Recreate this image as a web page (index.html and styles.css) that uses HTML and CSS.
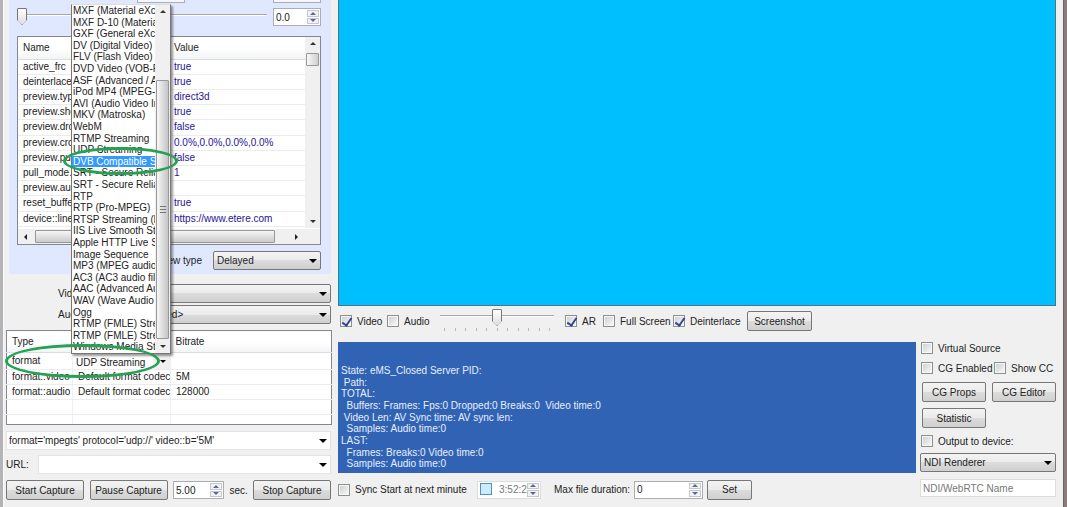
FILE: index.html
```
<!DOCTYPE html>
<html lang="en">
<head>
<meta charset="utf-8">
<title>Capture</title>
<link rel="stylesheet" href="styles.css">
</head>
<body>
<div class="window">
  <section class="side">
    <div class="props">
      <div class="cut-row"><span></span><span></span></div>
      <div class="slider-row">
        <div class="slider slider-start"><input type="range" min="0" max="100" value="0" aria-label="Level"></div>
        <div class="spin spin-small"><input type="text" value="0.0" aria-label="Level value"><span class="arrows"><button class="up" aria-label="Increase"></button><button class="down" aria-label="Decrease"></button></span></div>
      </div>
      <div class="grid-box">
        <div class="grid-main">
          <table class="grid props-grid">
            <thead><tr><th class="name-col">Name</th><th>Value</th></tr></thead>
            <tbody>
              <tr><td>active_frc</td><td>true</td></tr>
              <tr><td>deinterlace</td><td>true</td></tr>
              <tr><td>preview.type</td><td>direct3d</td></tr>
              <tr><td>preview.show</td><td>true</td></tr>
              <tr><td>preview.drop</td><td>false</td></tr>
              <tr><td>preview.crop</td><td>0.0%,0.0%,0.0%,0.0%</td></tr>
              <tr><td>preview.pull</td><td>false</td></tr>
              <tr><td>pull_mode.on</td><td>1</td></tr>
              <tr><td>preview.audio</td><td></td></tr>
              <tr><td>reset_buffers</td><td>true</td></tr>
              <tr><td>device::line</td><td>https://www.etere.com</td></tr>
            </tbody>
          </table>
          <div class="vbar"><i class="tri tri-up"></i><b></b><i class="tri tri-down"></i></div>
        </div>
        <div class="hbar"><i class="tri tri-left"></i><b></b><i class="tri tri-right"></i></div>
      </div>
      <div class="view-row">
        <label for="view">Preview type</label>
        <div class="select"><select id="view"><option>Delayed</option></select></div>
      </div>
    </div>
    <div class="codec-row"><label for="vid">Video</label><div class="select"><select id="vid"><option></option></select></div></div>
    <div class="codec-row"><label for="aud">Audio</label><div class="select"><select id="aud"><option>&lt;Not selected&gt;</option></select></div></div>
    <table class="grid format-grid">
      <thead><tr><th class="type-col">Type</th><th class="codec-col"></th><th>Bitrate</th></tr></thead>
      <tbody>
        <tr><td>format</td><td class="edit"><div class="select flat"><select aria-label="Format"><option>UDP Streaming</option></select></div></td><td></td></tr>
        <tr><td>format::video</td><td>Default format codec</td><td>5M</td></tr>
        <tr><td>format::audio</td><td>Default format codec</td><td>128000</td></tr>
        <tr><td></td><td></td><td></td></tr>
        <tr class="last"><td></td><td></td><td></td></tr>
      </tbody>
    </table>
    <div class="select plain"><select aria-label="Format string"><option>format='mpegts' protocol='udp://' video::b='5M'</option></select></div>
    <div class="url-row"><label for="url">URL:</label><div class="select plain"><select id="url"><option></option></select></div></div>
    <div class="capture-row">
      <button class="btn">Start Capture</button>
      <button class="btn">Pause Capture</button>
      <div class="spin spin-sec"><input id="sec" type="text" value="5.00"><span class="arrows"><button class="up" aria-label="More"></button><button class="down" aria-label="Less"></button></span></div>
      <label for="sec">sec.</label>
      <button class="btn">Stop Capture</button>
    </div>
  </section>

  <main class="main">
    <div class="screen"></div>
    <div class="view-tools">
      <label class="check"><input type="checkbox" checked>Video</label>
      <label class="check"><input type="checkbox">Audio</label>
      <div class="slider volume"><input type="range" min="0" max="100" value="50" aria-label="Volume"><span class="ticks"><i></i><i></i><i></i><i></i><i></i><i></i><i></i><i></i><i></i><i></i><i></i></span></div>
      <label class="check"><input type="checkbox" checked>AR</label>
      <label class="check"><input type="checkbox">Full Screen</label>
      <label class="check"><input type="checkbox" checked>Deinterlace</label>
      <button class="btn">Screenshot</button>
    </div>
    <div class="lower">
      <div class="status">
        <p>State: eMS_Closed Server PID:</p>
        <p> Path:</p>
        <p>TOTAL:</p>
        <p>  Buffers: Frames: Fps:0 Dropped:0 Breaks:0  Video time:0</p>
        <p> Video Len: AV Sync time: AV sync len:</p>
        <p>  Samples: Audio time:0</p>
        <p>LAST:</p>
        <p>  Frames: Breaks:0 Video time:0</p>
        <p>  Samples: Audio time:0</p>
      </div>
      <div class="sync-row">
        <label class="check sync"><input type="checkbox">Sync Start at next minute</label>
        <div class="spin time"><input class="hot" type="checkbox" aria-label="Use start time"><input type="text" value="3:52:28" aria-label="Start time"><span class="arrows"><button class="up" aria-label="Later"></button><button class="down" aria-label="Earlier"></button></span></div>
        <label for="dur">Max file duration:</label>
        <div class="spin dur"><input id="dur" type="text" value="0"><span class="arrows"><button class="up" aria-label="Longer"></button><button class="down" aria-label="Shorter"></button></span></div>
        <button class="btn">Set</button>
      </div>
      <div class="output">
        <label class="check"><input type="checkbox">Virtual Source</label>
        <div class="pair"><label class="check"><input type="checkbox">CG Enabled</label><label class="check"><input type="checkbox">Show CC</label></div>
        <div class="buttons"><button class="btn">CG Props</button><button class="btn">CG Editor</button><button class="btn">Statistic</button></div>
        <label class="check"><input type="checkbox">Output to device:</label>
        <div class="select"><select aria-label="Output device"><option>NDI Renderer</option></select></div>
        <input class="ndi" type="text" placeholder="NDI/WebRTC Name" aria-label="NDI/WebRTC Name">
      </div>
    </div>
  </main>

  <div class="popup">
    <ul role="listbox" aria-label="Formats">
      <li>MXF (Material eXchange</li><li>MXF D-10 (Material eX</li><li>GXF (General eXchange</li><li>DV (Digital Video)</li><li>FLV (Flash Video)</li><li>DVD Video (VOB-File)</li><li>ASF (Advanced / Active</li><li>iPod MP4 (MPEG-4)</li><li>AVI (Audio Video Inter</li><li>MKV (Matroska)</li><li>WebM</li><li>RTMP Streaming</li><li>UDP Streaming</li><li class="selected">DVB Compatible Stream</li><li>SRT - Secure Reliable</li><li>SRT - Secure Reliable</li><li>RTP</li><li>RTP (Pro-MPEG)</li><li>RTSP Streaming (by</li><li>IIS Live Smooth Stream</li><li>Apple HTTP Live Stream</li><li>Image Sequence</li><li>MP3 (MPEG audio layer</li><li>AC3 (AC3 audio file)</li><li>AAC (Advanced Audio</li><li>WAV (Wave Audio File)</li><li>Ogg</li><li>RTMP (FMLE) Stream</li><li>RTMP (FMLE) Stream</li><li>Windows Media Stream</li>
    </ul>
    <div class="vbar"><i class="tri tri-up"></i><b></b><i class="tri tri-down"></i></div>
  </div>
  <span class="ring ring-item"></span>
  <span class="ring ring-format"></span>
</div>
</body>
</html>
```
FILE: styles.css
```
* { box-sizing: border-box; }
body { margin: 0; background: #8a7c7b; }
body, button, input, select { font-family: "Liberation Sans", Arial, sans-serif; font-size: 10px; color: #222; }
button, input, select { margin: 0; padding: 0; outline: 0; }
.window {
  position: relative; display: flex; min-height: 505px; margin-right: 3px; background: #f0f0f0;
  border-left: 3px solid #b4b4b6; border-right: 1px solid #666; border-bottom: 1px solid #776b6b;
  box-shadow: inset 1px 0 #fafafa;
}

/* Left column */
.side { width: 329px; padding: 0 1px 6px 3px; display: flex; flex-direction: column; flex: none; }
.props { margin-left: 3px; padding: 0 10px 5px 8px; background: #dfe8ff; height: 274px; }
.cut-row { display: flex; justify-content: space-between; height: 3px; }
.cut-row span { width: 48px; background: #f4f6fb; border: 1px solid #abadb3; border-top: 0; }
.cut-row span:first-child { margin-left: 120px; }
.slider-row { display: flex; justify-content: space-between; align-items: flex-start; padding-top: 5px; height: 33px; }
.slider { position: relative; }
.slider input { appearance: none; display: block; width: 100%; height: 17px; background: linear-gradient(#a5a8ad, #a5a8ad) 0 6px / 100% 1px no-repeat, linear-gradient(#fff, #fff) 0 7px / 100% 1px no-repeat; }
.slider input::-webkit-slider-thumb { appearance: none; width: 10px; height: 17px; border: 0; background: linear-gradient(#fff, #ddd) content-box, #777; padding: 1px; clip-path: polygon(0 1px, 1px 0, 9px 0, 10px 1px, 10px 12px, 5px 17px, 0 12px); }
.slider-start { width: 250px; }
.spin { display: flex; border: 1px solid #abadb3; background: #fff; height: 18px; padding: 1px 1px 1px 2px; }
.spin input[type=text] { flex: 1; min-width: 0; border: 0; background: none; }
.spin-small { width: 48px; }
.arrows { display: flex; flex-direction: column; width: 12px; gap: 1px; flex: none; }
.arrows button { flex: 1; min-height: 0; border: 1px solid #c4c7cc; background: #f2f2f2; display: grid; place-items: center; }
.arrows button::after { content: ""; border: 3px solid transparent; border-top-width: 0; border-bottom: 3px solid #5a66a0; }
.arrows .down::after { transform: rotate(180deg); }

.grid-box { border: 1px solid #828790; background: #fff; height: 209px; display: flex; flex-direction: column; }
.grid-main { flex: 1; min-height: 0; display: flex; background: #fff; }
.grid { border-collapse: collapse; table-layout: fixed; background: #fff; }
.grid th { text-align: left; font-weight: 400; padding: 0 5px; background: linear-gradient(#fff 50%, #f3f4f5); border-bottom: 1px solid #dcdde0; }
.grid td { height: 15px; padding: 0 5px; line-height: 14px; white-space: nowrap; overflow: hidden; border-bottom: 1px solid #ececec; }
.props-grid { flex: 1; height: 190px; }
.props-grid .name-col { width: 151px; }
.props-grid th { height: 22px; }
.props-grid tr:nth-child(5n) td { height: 16px; }
.props-grid td + td { color: #1f1496; }
.vbar { width: 15px; background: #f0f0f0; display: flex; flex-direction: column; align-items: center; padding: 5px 0; flex: none; }
.vbar b { width: 13px; border: 1px solid #989898; border-radius: 1px; background: linear-gradient(90deg, #f8f8f8, #cfcfcf); }
.grid-box .vbar { align-self: flex-start; height: 191px; }
.grid-box .vbar b { height: 13px; margin: 8px 0 auto; }
.tri { width: 0; height: 0; border: 3px solid transparent; flex: none; }
.tri-up { border-top-width: 0; border-bottom-color: #333; }
.tri-down { border-bottom-width: 0; border-top-color: #333; }
.tri-left { border-left-width: 0; border-right-color: #222; }
.tri-right { border-right-width: 0; border-left-color: #222; }
.hbar { height: 15px; background: #f0f0f0; display: flex; align-items: center; padding: 0 22px 0 6px; flex: none; }
.hbar b { flex: 1; height: 13px; margin: 0 20px 0 8px; border: 1px solid #989898; border-radius: 1px; background: linear-gradient(#f6f6f6, #cbcbcb); }
.view-row { display: flex; justify-content: flex-end; align-items: center; gap: 11px; padding-top: 6px; }
.view-row .select { width: 108px; }

.select { position: relative; height: 19px; }
.select select { appearance: none; display: block; width: 100%; height: 100%; padding: 0 18px 0 3px; border: 1px solid #777; border-radius: 2px; background: linear-gradient(#f3f3f3, #ebebeb 50%, #dcdcdc 50%, #cfcfcf); }
.select::after { content: ""; position: absolute; right: 4px; top: 8px; border: 4px solid transparent; border-bottom-width: 0; border-top-color: #000; pointer-events: none; }
.select.plain select { background: #fff; border-color: #e3e3e6; border-radius: 0; padding-left: 2px; }
.select.flat { height: 16px; }
.select.flat select { border: 0; background: linear-gradient(90deg, #fff 80px, #f0f0f0 80px); padding: 3px 18px 0 3px; }
.select.flat::after { border-width: 3px 3px 0; top: 7px; }
.codec-row { display: grid; grid-template-columns: 40px 1fr; align-items: center; margin-left: 52px; }
.props + .codec-row { margin-top: 10px; margin-bottom: 2px; }
.codec-row .select select { padding-left: 17px; }
.format-grid { width: 326px; border: 1px solid #828790; margin-top: 6px; }
.format-grid .type-col { width: 66px; }
.format-grid .codec-col { width: 98px; }
.format-grid th { height: 22px; }
.format-grid td + td { border-left: 1px solid #f0f0f0; }
.format-grid td, .format-grid th { padding-left: 5px; padding-right: 0; }
.format-grid .edit { padding: 0; }
.format-grid .last td { height: 10px; line-height: 9px; border-bottom-color: #828790; }
.format-grid + .select { margin-top: 6px; }
.url-row { display: grid; grid-template-columns: 32px 1fr; align-items: center; margin-top: 5px; }
.capture-row { display: grid; grid-template-columns: 78px 78px 51px 18px 78px; justify-content: space-between; align-items: center; margin-top: 6px; }
.btn { height: 20px; border: 1px solid #777; border-radius: 2px; background: linear-gradient(#f3f3f3, #ebebeb 50%, #dcdcdc 50%, #d0d0d0); white-space: nowrap; }

/* Right column */
.main { flex: 1; min-width: 0; padding: 0 7px 6px 6px; display: flex; flex-direction: column; }
.screen { height: 306px; background: #00bfff; border: 1px solid #4b7487; border-top: 0; }
.check { display: flex; align-items: center; gap: 5px; white-space: nowrap; }
.check input, .hot { appearance: none; position: relative; width: 12px; height: 12px; flex: none; border: 1px solid #8e8f8f; background: linear-gradient(135deg, #cfd1d3, #f6f6f6) content-box, #f6f6f6; padding: 1px; }
.check input:checked::after { content: ""; position: absolute; left: 3px; top: 0; width: 4px; height: 8px; border: solid #37458e; border-width: 0 2px 2px 0; transform: rotate(35deg); }
.view-tools { display: grid; grid-template-columns: 47px 53px 125px 38px 70px 74px 65px; align-items: center; height: 30px; padding-left: 2px; }
.volume { width: 114px; height: 24px; }
.ticks { display: flex; justify-content: space-between; padding: 2px 4px 0; }
.ticks i { width: 1px; height: 3px; background: #bbb; }
.lower { display: grid; grid-template-columns: 1fr 136px; grid-template-rows: 131px auto; column-gap: 4px; padding-top: 6px; }
.status { background: #3163b5; color: #e7effc; padding: 23px 3px 3px; display: grid; grid-auto-rows: 1fr; white-space: pre; line-height: 12px; }
.status p { margin: 0; min-height: 0; }
.sync-row { display: grid; grid-template-columns: 139px 77px 80px 73px 45px; align-items: center; height: 33px; }
.time { width: 64px; border-color: #ddd; }
.time input[type=text] { color: #777; margin-left: 7px; }
.hot { border-color: #4d94bd; background: #cdecfb; }
.dur { width: 69px; }
.output { grid-column: 2; grid-row: 1 / 3; display: flex; flex-direction: column; }
.output > .check { padding-left: 1px; }
.pair { display: grid; grid-template-columns: 73px 1fr; padding: 8px 0 8px 1px; }
.buttons { display: grid; grid-template-columns: 1fr 1fr; gap: 6px; padding-left: 2px; margin-bottom: 7px; }
.output .select { margin-top: 6px; }
.ndi { width: 100%; height: 18px; margin-top: 7px; border: 1px solid #ddd; padding: 0 2px; background: #fff; }
.ndi::placeholder { color: #777; }

/* Open format list and its highlights */
.popup { position: absolute; left: 68px; top: 4px; width: 100px; height: 350px; display: flex; background: #fff; border: 1px solid #777; border-top-color: #ddd; box-shadow: 2px 2px 2px #0006; }
.popup ul { flex: 1; min-width: 0; margin: 0; padding: 0; list-style: none; display: grid; grid-auto-rows: 1fr; overflow: hidden; }
.popup li { min-height: 0; padding-left: 1px; line-height: 12px; white-space: nowrap; overflow: hidden; }
.popup .selected { background: #3399ff; color: #fff; }
.popup .vbar b { flex: 1; margin: 67px 0 6px; background: repeating-linear-gradient(#777 0 1px, transparent 1px 3px) center / 6px 7px no-repeat, linear-gradient(90deg, #f8f8f8, #c4c4c4); }
.ring { position: absolute; border: 3px solid #24a251; border-radius: 50%; pointer-events: none; }
.ring-item { left: 60px; top: 147px; width: 115px; height: 28px; }
.ring-format { left: 2px; top: 344px; width: 155px; height: 34px; }
```
